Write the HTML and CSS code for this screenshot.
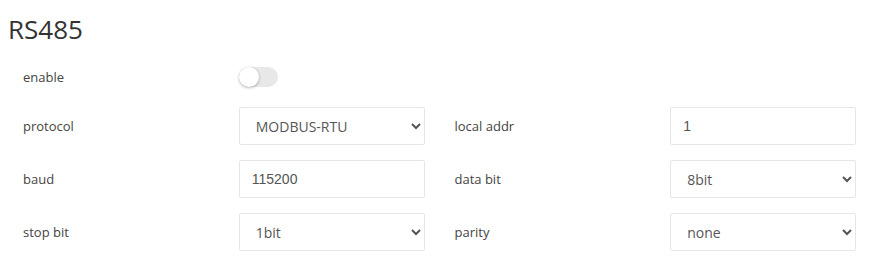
FILE: index.html
```html
<!DOCTYPE html>
<html lang="en">
<head>
  <meta charset="UTF-8">
  <title>RS485</title>
  <link rel="stylesheet" href="styles.css">
</head>
<body>

  <div class="panel">
    <h2>RS485</h2>

    <div class="form">
      <div class="row">
        <label>enable</label>
        <label class="switch">
          <input type="checkbox">
          <span class="slider"></span>
        </label>
      </div>

      <div class="row">
        <label>protocol</label>
        <select>
          <option>MODBUS-RTU</option>
          <option>MODBUS-TCP</option>
        </select>
        <label>local addr</label>
        <input type="text" value="1">
      </div>

      <div class="row">
        <label>baud</label>
        <input type="text" value="115200">
        <label>data bit</label>
        <select>
          <option>8bit</option>
          <option>7bit</option>
        </select>
      </div>

      <div class="row">
        <label>stop bit</label>
        <select>
          <option>1bit</option>
          <option>2bit</option>
        </select>
        <label>parity</label>
        <select>
          <option>none</option>
          <option>odd</option>
          <option>even</option>
        </select>
      </div>
    </div>
  </div>

</body>
</html>
```

FILE: styles.css
```css
body {
  margin: 0;
  padding: 0 8px;
  font-family: "Open Sans", sans-serif;
  background-color: #fff;
  color: #333;
}

h2 {
  font-size: 26px;
  font-weight: 400;
  margin: 10px 0 0 0;
  line-height: 38px;
  color: #333;
}

.form {
  display: flex;
  flex-direction: column;
  gap: 15px;
  padding: 14px 10px 0 15px;
}

.row {
  display: grid;
  grid-template-columns: repeat(4, 1fr);
  column-gap: 30px;
  align-items: center;
  min-height: 30px;
}

.row label {
  font-size: 13px;
  color: #444;
}

.row input[type="text"],
.row select {
  height: 38px;
  box-sizing: border-box;
  width: 100%;
  border: 1px solid #e6e6e6;
  border-radius: 2px;
  background-color: #fff;
  padding: 0 12px;
  font-family: "Liberation Sans", Arial, sans-serif;
  font-size: 14px;
  color: #555;
  outline: none;
}

.row select {
  padding-left: 12px;
  font-family: "Open Sans", sans-serif;
}

.switch {
  position: relative;
  display: inline-block;
  width: 39px;
  height: 20px;
}

.switch input {
  display: none;
}

.slider {
  position: absolute;
  inset: 0;
  background-color: #e8e8e8;
  border-radius: 10px;
}

.slider::before {
  content: "";
  position: absolute;
  left: 0;
  top: 0;
  width: 20px;
  height: 20px;
  border-radius: 50%;
  background-color: #fff;
  box-shadow: 0 1px 3px rgba(0, 0, 0, 0.3);
}
```
